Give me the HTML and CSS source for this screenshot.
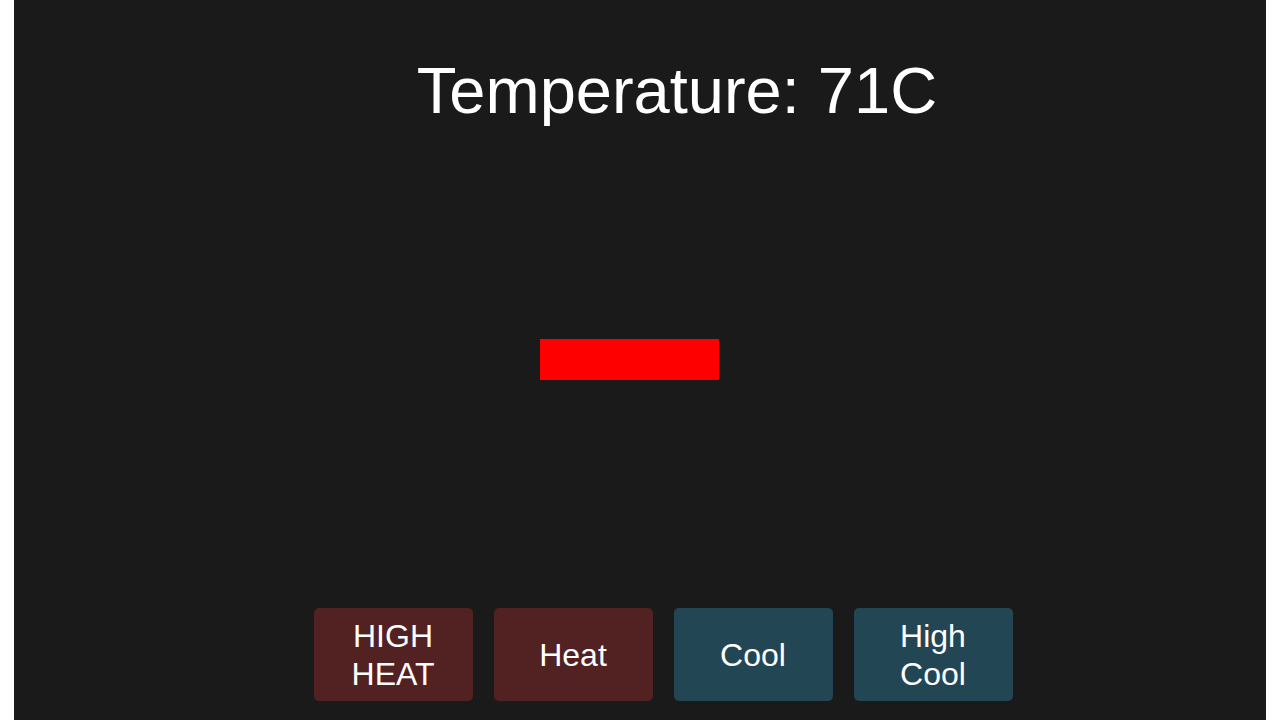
FILE: index.html
```html
<!DOCTYPE html>
<html>
<head>
<meta charset="utf-8">
<link rel="stylesheet" href="styles.css">
</head>
<body>
<div class="stage">
  <h1 class="title">Temperature: 71C</h1>
  <div class="meter"><div class="bar"></div></div>
  <div class="controls">
    <button class="btn heat">HIGH<br>HEAT</button>
    <button class="btn heat">Heat</button>
    <button class="btn cool">Cool</button>
    <button class="btn cool">High<br>Cool</button>
  </div>
</div>
</body>
</html>
```
FILE: styles.css
```css
html, body {
  margin: 0;
  padding: 0;
  background: #ffffff;
}
body {
  padding: 0 14px;
}
.stage {
  background: #1a1a1a;
  height: 720px;
  display: flex;
  flex-direction: column;
  font-family: "Liberation Sans", Arial, sans-serif;
  color: #ffffff;
}
.title {
  margin: 0;
  padding: 51px 0 0 74px;
  text-align: center;
  font-size: 65px;
  font-weight: normal;
  line-height: 80px;
}
.meter {
  padding: 208px 0 0 526px;
}
.bar {
  width: 179px;
  height: 41px;
  background: #ff0000;
}
.controls {
  margin-top: auto;
  margin-bottom: 19px;
  display: flex;
  justify-content: center;
  gap: 21px;
  padding-left: 46px;
}
.btn {
  width: 159px;
  height: 93px;
  border: none;
  border-radius: 5px;
  color: #ffffff;
  font-family: "Liberation Sans", Arial, sans-serif;
  font-size: 32px;
  line-height: 38px;
  padding: 0;
}
.heat {
  background: #522222;
}
.cool {
  background: #234654;
}
```
